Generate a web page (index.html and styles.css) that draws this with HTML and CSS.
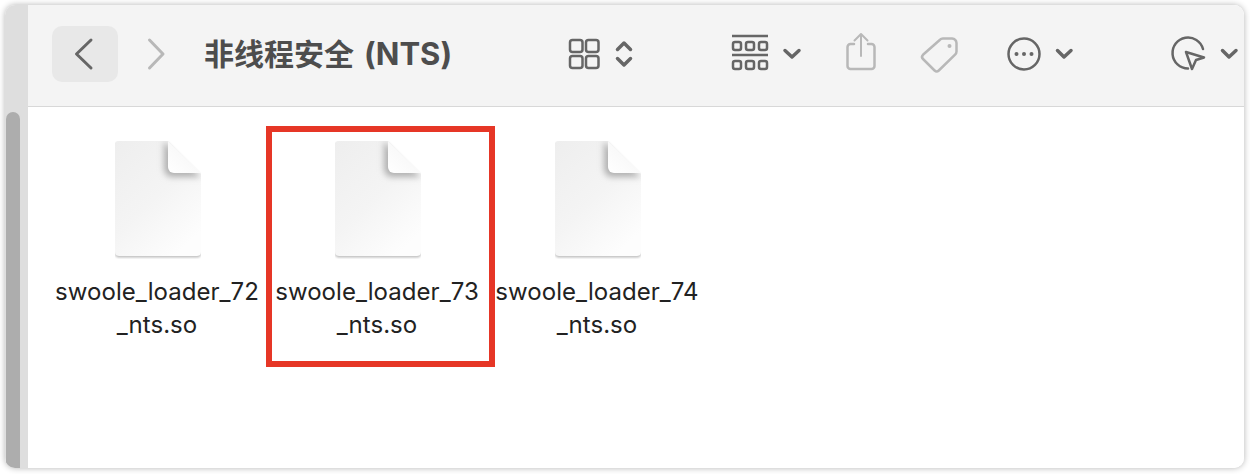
FILE: index.html
```html
<!DOCTYPE html>
<html lang="zh-CN">
<head>
    <meta charset="UTF-8">
    <title>非线程安全 (NTS)</title>
    <link rel="stylesheet" href="styles.css">
</head>
<body>
    <svg class="sprite" width="0" height="0">
        <defs>
            <linearGradient id="pageFill" x1="0" y1="0" x2="0.7" y2="1">
                <stop offset="0" stop-color="#eeeeee"/>
                <stop offset="0.55" stop-color="#f4f4f4"/>
                <stop offset="1" stop-color="#fdfdfd"/>
            </linearGradient>
            <linearGradient id="foldFill" x1="0" y1="1" x2="1" y2="0">
                <stop offset="0" stop-color="#ffffff"/>
                <stop offset="0.6" stop-color="#f8f8f8"/>
                <stop offset="1" stop-color="#e2e2e2"/>
            </linearGradient>
            <filter id="soft" x="-30%" y="-30%" width="160%" height="160%">
                <feGaussianBlur stdDeviation="3"/>
            </filter>
            <filter id="edge" x="-10%" y="-10%" width="120%" height="120%">
                <feGaussianBlur stdDeviation="0.800"/>
            </filter>
            <clipPath id="pageClip">
                <path d="M4 0H53L86 33V111a4 4 0 0 1-4 4H4a4 4 0 0 1-4-4V4a4 4 0 0 1 4-4Z"/>
            </clipPath>
        </defs>
        <symbol id="doc" viewBox="0 0 86 118">
            <path d="M4 1.500H53L86 34.500V112.500a4 4 0 0 1-4 4H4a4 4 0 0 1-4-4V5.500a4 4 0 0 1 4-4Z" fill="#bdbdbd" filter="url(#edge)"/>
            <path d="M4 0H53L86 33V111a4 4 0 0 1-4 4H4a4 4 0 0 1-4-4V4a4 4 0 0 1 4-4Z" fill="url(#pageFill)"/>
            <g clip-path="url(#pageClip)">
                <path d="M49 0V28a8 8 0 0 0 8 8H86Z" fill="#b0b0b0" filter="url(#soft)"/>
            </g>
            <path d="M53 0V26a6 6 0 0 0 6 6H86Z" fill="url(#foldFill)"/>
        </symbol>
    </svg>

    <div class="window">
        <div class="rail">
            <div class="rail-thumb"></div>
        </div>
        <div class="main">
            <header class="toolbar">
                <div class="back-btn">
                    <svg class="icon" width="66" height="56" viewBox="0 0 66 56">
                        <path d="M39 14L24.500 28L39 42" class="line"/>
                    </svg>
                </div>
                <svg class="icon forward" width="32" height="56" viewBox="0 0 32 56">
                    <path d="M9.500 14L23 28L9.500 42" class="line faded"/>
                </svg>
                <h1 class="title">非线程安全 <span class="title-code">(NTS)</span></h1>

                <svg class="icon view-switch" width="80" height="56" viewBox="0 0 80 56">
                    <g class="line thin">
                        <rect x="10" y="14" width="12.500" height="12" rx="2.500"/>
                        <rect x="26" y="14" width="12.500" height="12" rx="2.500"/>
                        <rect x="10" y="30" width="12.500" height="12" rx="2.500"/>
                        <rect x="26" y="30" width="12.500" height="12" rx="2.500"/>
                    </g>
                    <path d="M57.500 23.500L64 17L70.500 23.500M57.500 32.500L64 39L70.500 32.500" class="line chev"/>
                </svg>

                <svg class="icon group-by" width="80" height="56" viewBox="0 0 80 56">
                    <path d="M7 10H43M7 29H43" class="line rule"/>
                    <g class="line cell">
                        <rect x="8" y="16" width="8" height="8" rx="2"/>
                        <rect x="21" y="16" width="8" height="8" rx="2"/>
                        <rect x="34" y="16" width="8" height="8" rx="2"/>
                        <rect x="8" y="35" width="8" height="8" rx="2"/>
                        <rect x="21" y="35" width="8" height="8" rx="2"/>
                        <rect x="34" y="35" width="8" height="8" rx="2"/>
                    </g>
                    <path d="M60 24.500L67 31L74 24.500" class="line chev"/>
                </svg>

                <svg class="icon share" width="40" height="56" viewBox="0 0 40 56">
                    <path d="M14 18H10.500a3 3 0 0 0-3 3V40a3 3 0 0 0 3 3H31.500a3 3 0 0 0 3-3V21a3 3 0 0 0-3-3H28" class="line thin faded"/>
                    <path d="M21 30V8.500M14.500 14.500L21 8L27.500 14.500" class="line share-arrow faded"/>
                </svg>

                <svg class="icon tag" width="50" height="56" viewBox="0 0 50 56">
                    <path d="M28 12.500H37a5 5 0 0 1 4.500 4.500V25.500a4 4 0 0 1-1.200 2.800L23.800 44.500a3 3 0 0 1-4.200 0L8 33a3 3 0 0 1 0-4.200L25 13.700a4 4 0 0 1 3-1.200Z" class="line thin faded"/>
                    <circle cx="34.500" cy="20" r="2" class="dot faded-dot"/>
                </svg>

                <svg class="icon more" width="80" height="56" viewBox="0 0 80 56">
                    <circle cx="24" cy="28" r="15.500" class="line thin"/>
                    <circle cx="16.500" cy="28" r="2" class="dot"/>
                    <circle cx="24" cy="28" r="2" class="dot"/>
                    <circle cx="31.500" cy="28" r="2" class="dot"/>
                    <path d="M57.500 24.500L64 31L71 24.500" class="line chev"/>
                </svg>

                <svg class="icon markup" width="79" height="56" viewBox="0 0 79 56">
                    <path d="M23 42.500A15.500 15.500 0 1 1 38 23" class="line thin"/>
                    <path d="M21 26L39 31.500L31 34L27 43Z" class="line thin"/>
                    <path d="M57.500 24.500L64 31L71 24.500" class="line chev"/>
                </svg>
            </header>

            <main class="files">
                <div class="file">
                    <svg class="doc"><use href="#doc"/></svg>
                    <div class="file-name">swoole_loader_72<br>_nts.so</div>
                </div>
                <div class="file selected">
                    <svg class="doc"><use href="#doc"/></svg>
                    <div class="file-name">swoole_loader_73<br>_nts.so</div>
                    <div class="red-box"></div>
                </div>
                <div class="file">
                    <svg class="doc"><use href="#doc"/></svg>
                    <div class="file-name">swoole_loader_74<br>_nts.so</div>
                </div>
            </main>
        </div>
    </div>
</body>
</html>
```

FILE: styles.css
```css
body {
    margin: 0;
    padding: 5px 6px 6px 5px;
    height: 474px;
    box-sizing: border-box;
    background-color: #fff;
    overflow: hidden;
}

.sprite {
    position: absolute;
}

.window {
    display: flex;
    height: 463px;
    border-radius: 10px;
    overflow: hidden;
    box-shadow: 0 0 6px rgba(0, 0, 0, 0.3);
}

/* Scrollbar strip on the left */
.rail {
    display: flex;
    flex: 0 0 23px;
    flex-direction: column;
    padding-top: 107px;
    box-sizing: border-box;
    background-color: #dedede;
}

.rail-thumb {
    flex: 1;
    width: 14px;
    margin-left: 1px;
    background-color: #adadad;
    border-radius: 7px 7px 0 0;
}

.main {
    flex: 1;
    background-color: #fff;
}

.toolbar {
    display: flex;
    align-items: flex-start;
    height: 102px;
    padding: 21px 0 0 24px;
    box-sizing: border-box;
    background-color: #f4f4f4;
    border-bottom: 1px solid #d8d8d8;
}

.back-btn {
    width: 66px;
    height: 56px;
    background-color: #e8e8e8;
    border-radius: 10px;
}

.icon {
    display: block;
    flex: none;
}

.line {
    fill: none;
    stroke: #666;
    stroke-width: 3;
    stroke-linecap: round;
    stroke-linejoin: round;
}

.faded {
    stroke: #b8b8b8;
}

.thin {
    stroke-width: 2.500;
}

.chev {
    stroke-width: 3.500;
}

.rule {
    stroke-width: 2.500;
    stroke-linecap: butt;
}

.cell {
    stroke-width: 2.500;
}

.share-arrow {
    stroke-width: 2;
}

.dot {
    fill: #666;
}

.faded-dot {
    fill: #b8b8b8;
}

.forward {
    margin-left: 22px;
}

.title {
    flex: 0 0 356px;
    margin: 0 0 0 32px;
    font-family: "Inter", "Noto Sans CJK SC", sans-serif;
    font-size: 30px;
    font-weight: 700;
    line-height: 56px;
    word-spacing: 3px;
    color: #4d4d4d;
    white-space: nowrap;
}

.title-code {
    font-size: 31px;
}

.group-by {
    margin-left: 85px;
}

.share {
    margin-left: 35px;
}

.tag {
    margin-left: 35px;
}

.more {
    margin-left: 35px;
}

.markup {
    margin-left: 85px;
}

/* Icon grid */
.files {
    display: grid;
    grid-template-columns: repeat(3, 220px);
    padding: 34px 0 0 19px;
}

.file {
    position: relative;
    display: flex;
    flex-direction: column;
    align-items: center;
}

.doc {
    width: 86px;
    height: 118px;
    margin-left: 2px;
}

.file-name {
    margin-top: 16px;
    font-family: "Inter", sans-serif;
    font-size: 24px;
    line-height: 33px;
    letter-spacing: 0.05px;
    color: #222;
    text-align: center;
    white-space: nowrap;
}

.red-box {
    position: absolute;
    top: -15px;
    left: -1px;
    width: 229px;
    height: 241px;
    box-sizing: border-box;
    border: 6px solid #e63626;
}
```
